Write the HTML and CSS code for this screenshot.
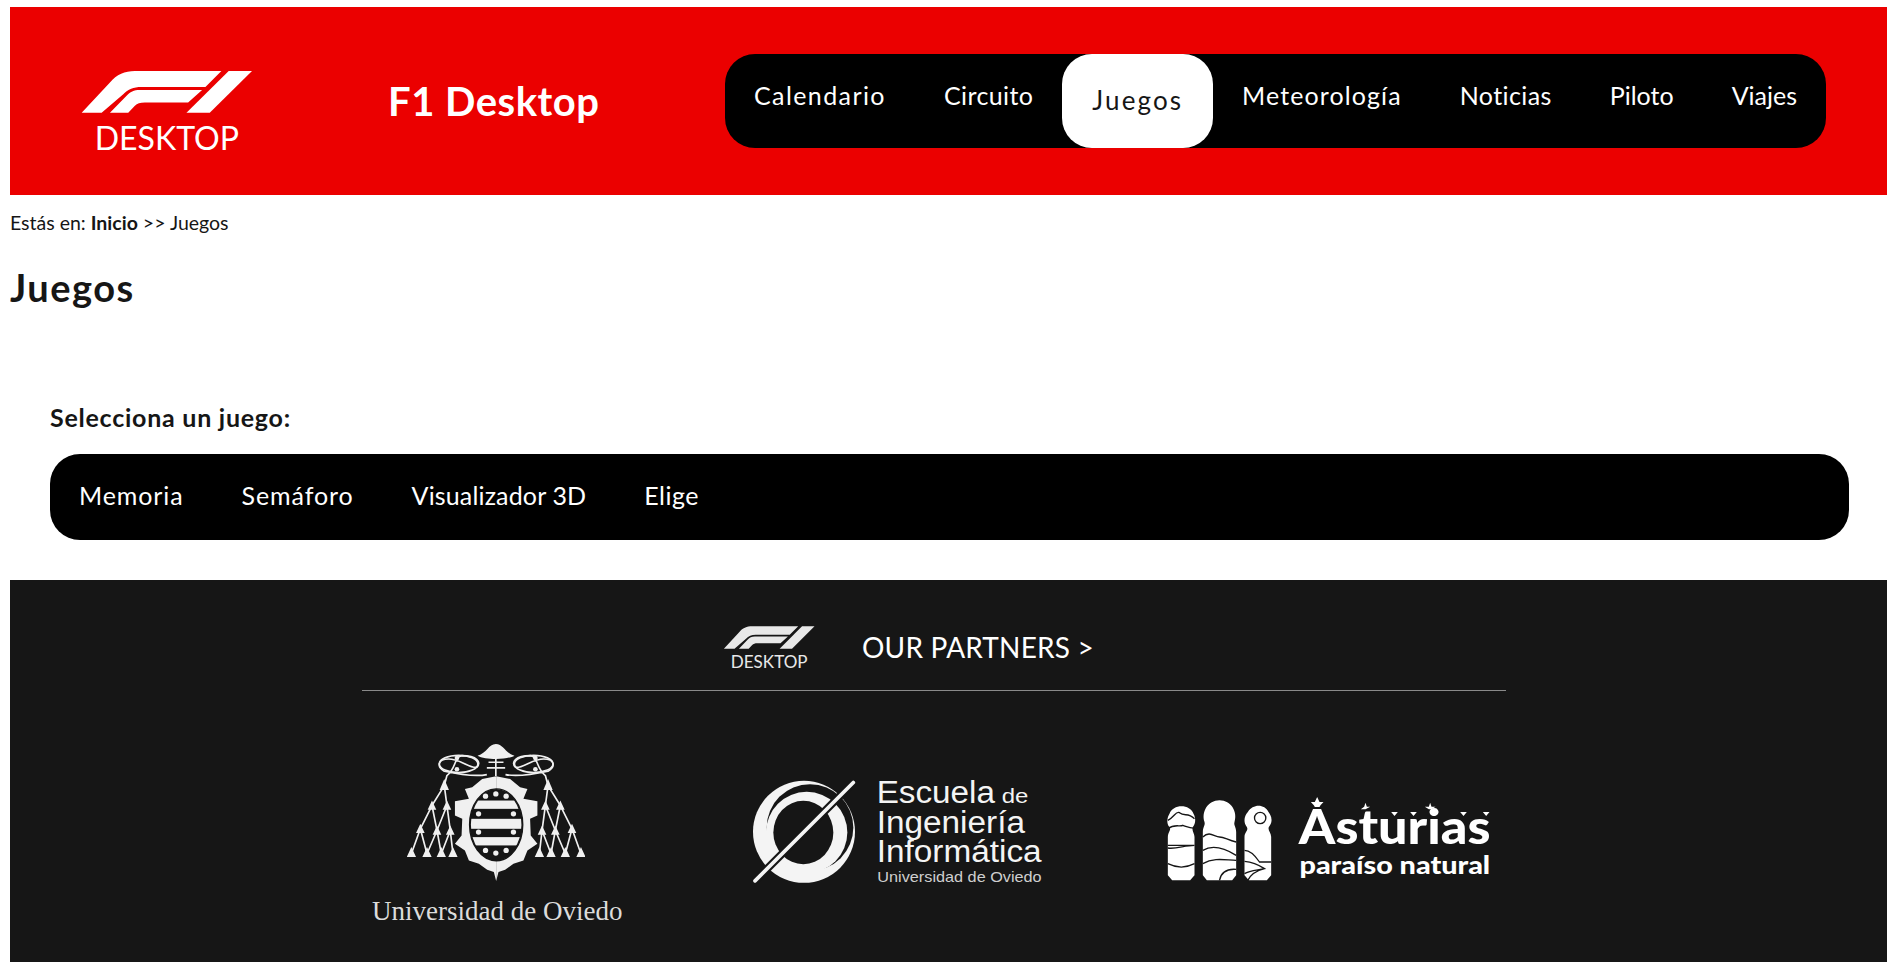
FILE: index.html
```html
<!DOCTYPE html>
<html lang="es">
<head>
    <meta charset="UTF-8">
    <meta name="viewport" content="width=device-width, initial-scale=1.0">
    <title>F1 Desktop - Juegos</title>
    <link rel="stylesheet" href="styles.css">
</head>

<body>
    <header class="site-header">
        <a class="brand" href="#">
            <svg class="f1-logo" viewBox="60 60 520 260">
                <path d="M65 188 L150 97 C170 72 195 62 225 62 H485 L437 110 H245 C220 110 205 117 190 132 L125 188 Z"/>
                <path d="M150 188 L200 137 C210 125 222 119 240 119 H427 L385 157 H255 C240 157 232 160 225 167 L205 188 Z"/>
                <path d="M507 62 H577 L450 188 H380 Z"/>
                <text class="logo-text" x="104" y="299" textLength="434" lengthAdjust="spacingAndGlyphs">DESKTOP</text>
            </svg>
        </a>
        <h1 class="site-title">F1 Desktop</h1>
        <nav class="main-nav">
            <a href="#">Calendario</a>
            <a href="#">Circuito</a>
            <a class="active" href="#">Juegos</a>
            <a href="#">Meteorología</a>
            <a href="#">Noticias</a>
            <a href="#">Piloto</a>
            <a href="#">Viajes</a>
        </nav>
    </header>

    <main>
        <p class="breadcrumb">Estás en: <a href="#">Inicio</a> &gt;&gt; Juegos</p>
        <h2 class="page-title">Juegos</h2>

        <section class="games">
            <h3>Selecciona un juego:</h3>
            <nav class="games-nav">
                <a href="#">Memoria</a>
                <a href="#">Semáforo</a>
                <a href="#">Visualizador 3D</a>
                <a href="#">Elige</a>
            </nav>
        </section>
    </main>

    <footer class="site-footer">
        <div class="partners">
            <div class="partners-head">
                <svg class="f1-logo-small" viewBox="60 60 520 260">
                    <path d="M65 188 L150 97 C170 72 195 62 225 62 H485 L437 110 H245 C220 110 205 117 190 132 L125 188 Z"/>
                    <path d="M150 188 L200 137 C210 125 222 119 240 119 H427 L385 157 H255 C240 157 232 160 225 167 L205 188 Z"/>
                    <path d="M507 62 H577 L450 188 H380 Z"/>
                    <text class="logo-text" x="104" y="299" textLength="434" lengthAdjust="spacingAndGlyphs">DESKTOP</text>
                </svg>
                <span class="partners-title">OUR PARTNERS &gt;</span>
            </div>

            <div class="partner-logos">
                <!-- Universidad de Oviedo -->
                <div class="uniovi">
                    <svg class="crest" viewBox="0 0 535 415">
                        <defs>
                            <clipPath id="oval"><ellipse cx="268" cy="243" rx="76" ry="104"/></clipPath>
                            <g id="crest-side">
                                <path class="crest-line" d="M112 125 L75 185 M112 125 L120 185 M75 185 L40 255 M75 185 L90 260 M120 185 L90 260 M120 185 L130 260 M40 255 L13 330 M40 255 L60 330 M90 260 L60 330 M90 260 L103 330 M130 260 L103 330 M130 260 L138 330"/>
                                <path class="crest-line" d="M240 92 C200 100 150 90 112 82 C90 70 90 45 125 45 C160 45 190 75 210 70 C225 55 210 35 165 35 C140 40 150 70 120 95 L112 125"/>
                                <ellipse class="crest-line" cx="155" cy="60" rx="58" ry="26"/>
                                <circle cx="150" cy="42" r="7"/><circle cx="150" cy="76" r="7"/>
                                <path d="M112 105 L126 138 H98 Z"/>
                                <path d="M75 170 L88 198 H62 Z M120 170 L133 198 H107 Z M40 240 L53 268 H27 Z M90 245 L103 273 H77 Z M130 245 L143 273 H117 Z"/>
                                <path d="M13 310 L27 340 H-1 Z M60 310 L74 340 H46 Z M103 310 L117 340 H89 Z M138 310 L152 340 H124 Z"/>
                            </g>
                            <path id="crest-half" d="M268 97 L310 105 L340 130 L362 135 L350 165 L392 172 L392 215 L370 225 L372 275 L392 300 L362 320 L350 350 L320 360 L295 378 L275 385 L268 412 Z"/>
                        </defs>
                        <path d="M212 35 C240 28 245 0 267 0 C290 0 295 28 323 35 C300 48 235 48 212 35 Z"/>
                        <path class="crest-line" d="M267 30 V96 M245 55 H290 M240 72 H295"/>
                        <use href="#crest-side"/>
                        <use href="#crest-side" transform="matrix(-1 0 0 1 536 0)"/>
                        <use href="#crest-half"/>
                        <use href="#crest-half" transform="matrix(-1 0 0 1 536 0)"/>
                        <ellipse cx="268" cy="243" rx="80" ry="108" class="oval-bg"/>
                        <g clip-path="url(#oval)">
                            <rect x="180" y="170" width="180" height="25"/>
                            <rect x="180" y="225" width="180" height="30"/>
                            <rect x="180" y="280" width="180" height="25"/>
                        </g>
                        <circle cx="236" cy="157" r="8"/><circle cx="267" cy="150" r="8"/><circle cx="298" cy="157" r="8"/>
                        <circle cx="215" cy="210" r="8"/><circle cx="320" cy="210" r="8"/>
                        <circle cx="215" cy="265" r="8"/><circle cx="320" cy="265" r="8"/>
                        <circle cx="236" cy="320" r="8"/><circle cx="267" cy="328" r="8"/><circle cx="298" cy="320" r="8"/>
                    </svg>
                    <p class="uniovi-name">Universidad de Oviedo</p>
                </div>

                <!-- Escuela de Ingenieria Informatica -->
                <svg class="eii" viewBox="150 525 885 335">
                    <circle cx="312" cy="698" r="153"/>
                    <circle class="ink" cx="330" cy="685" r="130"/>
                    <circle cx="320" cy="700" r="122"/>
                    <ellipse class="ink" cx="310" cy="700" rx="90" ry="95"/>
                    <path class="slash-gap" d="M165 845 L460 550"/>
                    <path class="slash" d="M165 845 L460 550"/>
                    <text class="eii-big" x="530" y="612" textLength="355" lengthAdjust="spacingAndGlyphs">Escuela</text>
                    <text class="eii-de" x="905" y="612" textLength="80" lengthAdjust="spacingAndGlyphs">de</text>
                    <text class="eii-big" x="530" y="703" textLength="445" lengthAdjust="spacingAndGlyphs">Ingeniería</text>
                    <text class="eii-big" x="530" y="788" textLength="495" lengthAdjust="spacingAndGlyphs">Informática</text>
                    <text class="eii-small" x="532" y="850" textLength="493" lengthAdjust="spacingAndGlyphs">Universidad de Oviedo</text>
                </svg>

                <!-- Asturias paraiso natural -->
                <svg class="asturias" viewBox="140 105 980 255">
                    <path d="M145 340 V225 C145 210 156 205 150 195 C140 185 143 165 150 155 C160 125 212 125 222 155 C230 170 228 185 220 195 C216 205 225 215 225 225 V340 L212 355 H158 Z"/>
                    <path d="M250 340 V210 C250 195 258 190 255 180 C245 150 265 115 300 115 C335 115 355 150 345 180 C342 190 350 195 350 210 V340 L338 355 H262 Z"/>
                    <path d="M375 340 V225 C375 210 388 205 382 195 C370 180 375 160 385 150 C400 125 435 125 447 150 C458 165 460 180 448 195 C444 205 455 212 455 225 V340 L442 355 H388 Z"/>
                    <circle class="ink-line" cx="422" cy="168" r="17"/>
                    <path class="ink-line" d="M145 175 C165 165 170 145 180 152 C195 165 205 150 225 170 M145 200 C165 185 180 195 190 190 C205 195 215 200 225 198 M145 250 H225 M145 258 C170 262 195 250 225 250 M145 305 C175 320 200 318 225 305"/>
                    <path class="ink-line" d="M250 225 C270 205 285 225 300 225 C315 225 325 235 350 240 M250 265 C275 250 310 255 350 280 M250 305 C285 285 320 295 350 295 M300 355 C305 330 325 320 350 322"/>
                    <path class="ink-line" d="M375 265 C395 265 410 285 420 300 H455 M375 298 C400 300 420 310 435 320 C410 325 390 325 375 335 M385 355 C395 335 415 325 435 320"/>
                    <path d="M593 105 L600 120 H612 L603 130 L600 135 H586 L583 130 L574 120 H586 Z M738 122 L742 134 H752 L738 142 H724 L734 134 Z M932 122 L936 134 H948 L936 142 H928 L916 134 H928 Z M815 150 H835 L825 162 Z M872 150 H892 L882 162 Z M1022 150 H1042 L1032 162 Z M1090 150 H1110 L1100 162 Z"/>
                    <text class="ast-big" x="538" y="245" textLength="575" lengthAdjust="spacingAndGlyphs">Asturias</text>
                    <text class="ast-small" x="540" y="335" textLength="572" lengthAdjust="spacingAndGlyphs">paraíso natural</text>
                </svg>
            </div>
        </div>
    </footer>
</body>
</html>
```

FILE: styles.css
```css
body {
    font-family: Lato, "Open Sans", sans-serif;
    color: #161616;
    background-color: #fff;
    margin: 7px 0 0 10px;
    padding: 0;
}

a {
    color: inherit;
    text-decoration: none;
}

.site-header {
    display: flex;
    align-items: center;
    height: 188px;
    background-color: #eb0000;
}

.brand {
    display: block;
    margin-left: 70px;
    width: 173px;
    height: 87px;
    margin-top: 25px;
}

.f1-logo {
    display: block;
    width: 173px;
    height: 87px;
    fill: #fff;
}

.logo-text {
    font-family: Lato, sans-serif;
    font-size: 98px;
    font-weight: 400;
}

.site-title {
    margin: 0 0 0 135px;
    width: 337px;
    color: #fff;
    font-size: 40px;
    font-weight: 700;
    letter-spacing: 0.5px;
}

.main-nav {
    display: flex;
    background-color: #000;
    border-radius: 30px;
    height: 94px;
    overflow: hidden;
}

.main-nav a {
    padding: 24px 29px 0;
    color: #fff;
    font-size: 25px;
    line-height: 34px;
    letter-spacing: 0.4px;
}

/* the words run wider or narrower than the sans we have here */
.main-nav a:nth-child(1) {
    letter-spacing: 1.4px;
}

.main-nav a:nth-child(4) {
    letter-spacing: 1.1px;
}

.main-nav a:nth-child(6),
.main-nav a:nth-child(7) {
    letter-spacing: 0;
}

.main-nav a.active {
    padding: 29px 30px 0;
    background-color: #fff;
    color: #161616;
    border-radius: 30px;
    font-size: 26px;
    letter-spacing: 2.1px;
}

.breadcrumb {
    margin: 16px 0 0;
    font-size: 19.5px;
    line-height: 24px;
}

.breadcrumb a {
    font-weight: 700;
}

.page-title {
    margin: 31px 0 0;
    font-size: 38px;
    line-height: 42px;
    font-weight: 700;
    letter-spacing: 1.5px;
}

.games {
    padding: 0 38px 0 40px;
}

.games h3 {
    margin: 96px 0 0;
    font-size: 25px;
    line-height: 26px;
    font-weight: 700;
    letter-spacing: 0.75px;
}

.games-nav {
    display: flex;
    margin-top: 24px;
    height: 86px;
    background-color: #000;
    border-radius: 30px;
}

.games-nav a {
    padding: 24px 29px 0;
    color: #fff;
    font-size: 25px;
    line-height: 34px;
    letter-spacing: 0.9px;
}

.games-nav a:nth-child(3) {
    letter-spacing: 0.15px;
}

.games-nav a:nth-child(4) {
    letter-spacing: 0.5px;
}

.site-footer {
    margin-top: 40px;
    height: 382px;
    background-color: #161616;
    color: #fff;
    overflow: hidden;
}

.partners {
    width: 1144px;
    margin-left: 352px;
}

.partners-head {
    display: flex;
    align-items: flex-start;
    height: 111px;
    border-bottom: 1px solid #8a8a8a;
    box-sizing: border-box;
    padding: 46px 0 0 361px;
}

.f1-logo-small {
    width: 92px;
    height: 46px;
    fill: #e8e8e8;
}

.partners-title {
    margin: 4px 0 0 47px;
    font-size: 28px;
    line-height: 34px;
    font-weight: 400;
    letter-spacing: 0.2px;
    white-space: nowrap;
}

.partner-logos {
    display: flex;
    align-items: flex-start;
    margin-top: 53px;
}

.uniovi {
    width: 381px;
}

.crest {
    display: block;
    width: 178px;
    height: 138px;
    margin: 0 0 0 45px;
    fill: #f0f0f0;
}

.crest-line {
    fill: none;
    stroke: #f0f0f0;
    stroke-width: 5;
}

.oval-bg {
    fill: #161616;
    stroke: #161616;
    stroke-width: 4;
}

.uniovi-name {
    margin: 14px 0 0 10px;
    white-space: nowrap;
    font-family: "Liberation Serif", serif;
    font-size: 27px;
    line-height: 30px;
    color: #dcdcdc;
}

.eii {
    width: 295px;
    height: 112px;
    margin: 30px 0 0 7px;
    fill: #f4f4f4;
}

.ink {
    fill: #161616;
}

.slash-gap {
    fill: none;
    stroke: #161616;
    stroke-width: 24;
}

.slash {
    fill: none;
    stroke: #f4f4f4;
    stroke-width: 11;
    stroke-linecap: round;
}

.eii-big {
    font-family: "Liberation Sans", sans-serif;
    font-size: 92px;
}

.eii-de {
    font-family: "Liberation Sans", sans-serif;
    font-size: 62px;
}

.eii-small {
    font-family: "Liberation Sans", sans-serif;
    font-size: 45px;
    fill: #cfcfcf;
}

.asturias {
    width: 327px;
    height: 85px;
    margin: 53px 0 0 121px;
    fill: #fff;
}

.ink-line {
    fill: none;
    stroke: #161616;
    stroke-width: 4;
}

.ast-big {
    font-family: Lato, sans-serif;
    font-size: 140px;
    font-weight: 900;
}

.ast-small {
    font-family: Lato, sans-serif;
    font-size: 76px;
    font-weight: 900;
}
```
